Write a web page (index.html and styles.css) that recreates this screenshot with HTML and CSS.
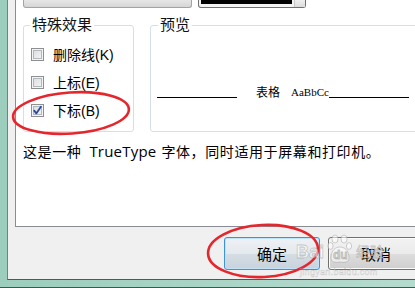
FILE: index.html
```html
<!DOCTYPE html>
<html lang="zh-CN">
<head>
<meta charset="utf-8">
<title>字体</title>
<link rel="stylesheet" href="styles.css">
</head>
<body>
<div class="window">
  <div class="dialog">
    <div class="panel">
      <div class="combos">
        <div class="combo combo-wide"></div>
        <div class="combo combo-color"><span class="swatch"></span><span class="drop"></span></div>
      </div>
      <div class="groups">
        <fieldset class="group effects">
          <legend>特殊效果</legend>
          <label class="check"><span class="box"></span><span>删除线(K)</span></label>
          <label class="check"><span class="box"></span><span>上标(E)</span></label>
          <label class="check"><span class="box"><svg viewBox="0 0 11 11" width="11" height="11"><path d="M2.2 5.6 L4.3 8.4 L8.9 1.8" fill="none" stroke="#2b4a9a" stroke-width="1.8" stroke-linecap="round" stroke-linejoin="round"/></svg></span><span>下标(B)</span></label>
        </fieldset>
        <fieldset class="group preview">
          <legend>预览</legend>
          <div class="sample">
            <span class="rule"></span>
            <span class="sample-text">表格<span class="latin">AaBbCc</span></span>
            <span class="rule"></span>
          </div>
        </fieldset>
      </div>
      <p class="desc">这是一种<span class="desc-latin">TrueType</span>字体，同时适用于屏幕和打印机。</p>
    </div>
    <div class="buttons">
      <button class="btn btn-default">确定</button>
      <button class="btn">取消</button>
    </div>
  </div>

  <svg class="marks" width="415" height="288" viewBox="0 0 415 288">
    <ellipse cx="71" cy="113" rx="58" ry="20.5" transform="rotate(-4 71 113)" fill="none" stroke="#e4262d" stroke-width="2.6"/>
    <ellipse cx="263" cy="251" rx="55" ry="26" transform="rotate(-3 263 251)" fill="none" stroke="#e4262d" stroke-width="2.6"/>
  </svg>

  <div class="watermark">
    <div class="wm-top">
      <span class="wm-bai">Bai</span>
      <span class="wm-paw">
        <svg viewBox="0 0 26 30" width="26" height="30">
          <g fill="rgba(255,255,255,0.55)" stroke="rgba(150,150,150,0.45)" stroke-width="1">
            <ellipse cx="8" cy="5" rx="3" ry="4"/>
            <ellipse cx="17" cy="5" rx="3" ry="4"/>
            <ellipse cx="3.5" cy="12" rx="2.6" ry="3.4"/>
            <ellipse cx="22" cy="12" rx="2.6" ry="3.4"/>
            <path d="M4 24 C4 16 9 13 13 13 C17 13 22 16 22 24 C22 28 18 29 13 28 C8 29 4 28 4 24 Z"/>
          </g>
        </svg>
        <span class="wm-du">du</span>
      </span>
      <span class="wm-cn">经验</span>
    </div>
    <div class="wm-url">jingyan.baidu.com</div>
  </div>
</div>
</body>
</html>
```

FILE: styles.css
```css
html, body {
  margin: 0;
  padding: 0;
}

body {
  width: 415px;
  height: 288px;
  overflow: hidden;
  font-family: "Liberation Sans", "Noto Sans CJK SC", sans-serif;
  color: #000;
}

.window {
  position: relative;
  width: 415px;
  height: 288px;
  box-sizing: border-box;
  overflow: hidden;
  padding: 0 0 7px 7px;
  border-bottom: 1px solid #44525a;
  background: linear-gradient(90deg, #9ccdbd 0%, #b5dbce 100%);
}

.dialog {
  height: 280px;
  box-sizing: border-box;
  width: 460px;
  background: #f0f0f0;
  border-left: 1px solid #6f8088;
  border-bottom: 1px solid #4a585f;
  padding-left: 7px;
  display: flex;
  flex-direction: column;
}

.panel {
  height: 227px;
  box-sizing: border-box;
  background: #fff;
  border-left: 1px solid #898c95;
  border-bottom: 1px solid #898c95;
  padding-left: 7px;
  display: flex;
  flex-direction: column;
}

/* cropped combo boxes at the top */
.combos {
  display: flex;
  gap: 6px;
}

.combo {
  height: 8px;
  box-sizing: border-box;
  border: 1px solid #9ea4ab;
  border-top: none;
  border-radius: 0 0 3px 3px;
  background: linear-gradient(#e6e6e6, #d6d6d6);
}

.combo-wide {
  width: 169px;
}

.combo-color {
  width: 108px;
  display: flex;
  align-items: flex-start;
  background: #f4f4f4;
  border-color: #707070;
}

.swatch {
  width: 91px;
  height: 4px;
  margin-left: 2px;
  background: #000;
}

.drop {
  flex: 1;
  align-self: stretch;
  margin-left: 2px;
  border-left: 1px solid #c9c9c9;
  background: linear-gradient(#efefef, #dcdcdc);
}

/* group boxes */
.groups {
  display: flex;
  gap: 16px;
  margin-top: 9px;
}

.group {
  margin: 0;
  padding: 0;
  min-width: 0;
  height: 115px;
  box-sizing: border-box;
  border: 1px solid #d5dfe5;
  border-radius: 3px;
}

.group legend {
  font-size: 15px;
  line-height: 16px;
  padding: 0 2px;
  margin-left: 6px;
  color: #111;
}

.effects {
  width: 111px;
}

.preview {
  width: 300px;
}

.preview legend {
  margin-left: 7px;
}

.check {
  display: flex;
  align-items: center;
  height: 13px;
  margin-top: 15px;
  padding-left: 7px;
  font-size: 14px;
  line-height: 16px;
  white-space: nowrap;
}

.box {
  width: 13px;
  height: 13px;
  flex: none;
  box-sizing: border-box;
  margin-right: 9px;
  border: 1px solid #8e8f8f;
  background: linear-gradient(135deg, #d9dbde 0%, #f6f6f6 100%);
  box-shadow: inset 0 0 0 1px #f4f4f4, inset 0 0 0 2px #b2b7bd;
  display: flex;
}

.box svg {
  display: block;
}

.sample {
  display: flex;
  align-items: flex-end;
  height: 50px;
  padding-left: 6px;
  margin-top: 15px;
}

.rule {
  width: 80px;
  height: 1px;
  background: #000;
  flex: none;
}

.sample-text {
  display: flex;
  align-items: flex-end;
  margin-left: 19px;
  font-family: "Noto Sans CJK SC", sans-serif;
  font-size: 12px;
  line-height: 13px;
  color: #000;
}

.latin {
  font-family: "Liberation Serif", serif;
  font-size: 11px;
  line-height: 12px;
  margin-left: 11px;
}

.desc {
  margin: 10px 0 0;
  font-size: 14px;
  line-height: 18px;
  letter-spacing: 0.6px;
  white-space: nowrap;
}

.desc-latin {
  font-family: "Open Sans", sans-serif;
  font-size: 15px;
  letter-spacing: 0.2px;
  margin: 0 5px 0 8px;
}

/* buttons */
.buttons {
  display: flex;
  gap: 8px;
  margin-top: 10px;
  padding-left: 209px;
}

.btn {
  width: 96px;
  height: 33px;
  flex: none;
  padding: 0;
  font-family: "Liberation Sans", "Noto Sans CJK SC", sans-serif;
  font-size: 15px;
  color: #000;
  border: 1px solid #707070;
  border-radius: 3px;
  background: linear-gradient(#f2f2f2 0%, #ebebeb 50%, #dddddd 51%, #cfcfcf 100%);
  box-shadow: inset 0 0 0 1px #fcfcfc;
}

.btn-default {
  border-color: #3c94d6;
  background: linear-gradient(#eef1f4 0%, #e4e9ee 50%, #d5dde4 51%, #c9d3dc 100%);
  box-shadow: inset 0 0 0 1px #bfe3f8;
}

/* annotation overlay */
.marks {
  position: absolute;
  left: 0;
  top: 0;
  pointer-events: none;
}

.watermark {
  position: absolute;
  left: 296px;
  top: 232px;
  pointer-events: none;
  color: rgba(255, 255, 255, 0.6);
  -webkit-text-stroke: 0.8px rgba(140, 140, 140, 0.45);
}

.wm-top {
  display: flex;
  align-items: flex-end;
  height: 32px;
}

.wm-bai {
  font-family: "Liberation Sans", sans-serif;
  font-weight: bold;
  font-size: 18px;
  line-height: 20px;
  margin-bottom: 2px;
}

.wm-paw {
  position: relative;
  width: 26px;
  height: 30px;
  margin-left: 3px;
}

.wm-paw svg {
  display: block;
}

.wm-du {
  position: absolute;
  left: 6px;
  bottom: 3px;
  font-family: "Liberation Sans", sans-serif;
  font-weight: bold;
  font-size: 12px;
  line-height: 12px;
  color: rgba(200, 200, 200, 0.7);
}

.wm-cn {
  font-family: "Noto Sans CJK SC", sans-serif;
  font-size: 14px;
  line-height: 18px;
  margin-left: 3px;
  margin-bottom: 4px;
}

.wm-url {
  font-family: "Liberation Sans", sans-serif;
  font-size: 9px;
  line-height: 10px;
  margin-top: 3px;
  margin-left: 4px;
  letter-spacing: 0.3px;
  -webkit-text-stroke: 0.4px rgba(140, 140, 140, 0.45);
}
```
